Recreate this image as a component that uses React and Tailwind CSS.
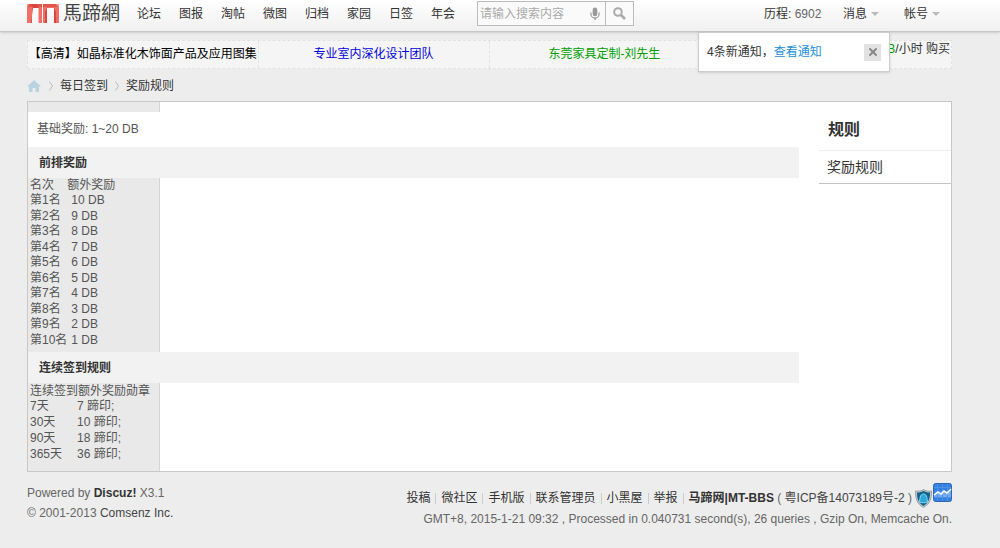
import React from 'react';
import { Mic, X } from 'lucide-react';

const NAV = ['论坛', '图报', '淘帖', '微图', '归档', '家园', '日签', '年会'];

const RANKS = [
  ['第1名', '10 DB'],
  ['第2名', '9 DB'],
  ['第3名', '8 DB'],
  ['第4名', '7 DB'],
  ['第5名', '6 DB'],
  ['第6名', '5 DB'],
  ['第7名', '4 DB'],
  ['第8名', '3 DB'],
  ['第9名', '2 DB'],
  ['第10名', '1 DB'],
];

const STREAKS = [
  ['7天', '7 蹄印;'],
  ['30天', '10 蹄印;'],
  ['90天', '18 蹄印;'],
  ['365天', '36 蹄印;'],
];

const FOOTER_LINKS = ['投稿', '微社区', '手机版', '联系管理员', '小黑屋', '举报'];

const Logo = () => (
  <a href="#" className="flex w-[110px] shrink-0 items-center gap-1 text-[19px] leading-6 text-[#444]">
    <svg width="32" height="19" viewBox="0 0 32 19" aria-hidden="true">
      <path d="M0 0H15V19H11.500V4H5V19H0z" fill="#ee7068" />
      <path d="M16 0H32V19H27V4H20V19H16z" fill="#ee7068" />
      <path d="M0 0H15V3H0zM16 0H32V3H16z" fill="#e2564d" />
      <path d="M4 0L6 4L4 19H5V4H12L9 0zM20 4L18 8V19H20zM27 4L29 8V19H27z" fill="#d8463e" />
      <path d="M0 4L2 0H0zM32 4L29 0H32z" fill="#f79a93" />
    </svg>
    馬蹄網
  </a>
);

const Caret = () => (
  <span className="border-x-4 border-t-4 border-x-transparent border-t-[#bbb]" />
);

const Notice = () => (
  <div className="absolute top-8 right-[110px] flex h-10 w-48 items-center justify-between border border-[#ccc] bg-white px-2 shadow">
    <p>
      4条新通知，
      <a href="#" className="text-[#1b91d6]">查看通知</a>
    </p>
    <button type="button" aria-label="关闭" className="flex size-[17px] items-center justify-center bg-[#e2e2e2] text-[#888]">
      <X size={12} strokeWidth={4} />
    </button>
  </div>
);

const Header = () => (
  <header className="relative z-10 flex h-8 items-center border-b border-[#c6c6c6] bg-linear-to-b from-white to-[#f0f0f0] pr-12 pb-1 pl-[27px] shadow-sm">
    <Logo />
    <nav className="flex gap-[18px]">
      {NAV.map((item) => (
        <a key={item} href="#" className="w-6 whitespace-nowrap">{item}</a>
      ))}
    </nav>
    <form className="ml-[22px] flex h-[25px] w-[157px] border border-[#bbb] bg-[#fafafa]">
      <input
        type="text"
        aria-label="搜索"
        placeholder="请输入搜索内容"
        className="w-0 flex-1 px-[2px] outline-none placeholder:text-[#aaa]"
      />
      <button type="button" aria-label="语音搜索" className="flex w-5 items-center justify-center text-[#999]">
        <Mic size={14} strokeWidth={2} className="[&>rect]:fill-[#999]" />
      </button>
      <button type="submit" aria-label="搜索" className="flex w-7 items-center justify-center border-l border-[#bbb]">
        <svg width="13" height="13" viewBox="0 0 13 13" fill="none" stroke="#aaa" strokeWidth="2" aria-hidden="true">
          <circle cx="5" cy="5" r="3.800" />
          <path d="M8 8L12 12" strokeWidth="2.500" />
        </svg>
      </button>
    </form>
    <div className="ml-auto flex">
      <a href="#" className="w-[79px]">历程: <span className="text-[#666]">6902</span></a>
      <button type="button" className="flex w-[61px] items-center gap-1">消息 <Caret /></button>
      <button type="button" className="flex w-12 items-center gap-1">帐号 <Caret /></button>
    </div>
    <Notice />
  </header>
);

const AdRow = () => (
  <div className="grid h-[29px] grid-cols-4 items-stretch border border-dashed border-[#e2e2e2] bg-[#f5f5f5] text-center leading-[27px]">
    <a href="#" className="border-r border-dashed border-[#e2e2e2] whitespace-nowrap text-black">【高清】如晶标准化木饰面产品及应用图集</a>
    <a href="#" className="border-r border-dashed border-[#e2e2e2] text-[#0000e0]">专业室内深化设计团队</a>
    <a href="#" className="border-r border-dashed border-[#e2e2e2] text-[#00a000]">东莞家具定制-刘先生</a>
    <a href="#" className="pr-px text-right leading-4"><span className="text-[#00a000]">5 DB</span>/小时 购买</a>
  </div>
);

const Separator = () => (
  <svg width="4" height="10" viewBox="0 0 4 10" fill="none" stroke="#bbb" aria-hidden="true">
    <path d="M0.500 0.500L3.500 5L0.500 9.500" />
  </svg>
);

const Breadcrumb = () => (
  <div className="flex h-8 items-center gap-[7px] pt-[2px]">
    <a href="#" aria-label="首页" className="mr-px">
      <svg width="14" height="12" viewBox="0 0 14 12" fill="#b9d3e0" aria-hidden="true">
        <path d="M7 0l7 6.500h-2V12H8.500V8h-3v4H2V6.500H0z" />
      </svg>
    </a>
    <Separator />
    <a href="#">每日签到</a>
    <Separator />
    <a href="#">奖励规则</a>
  </div>
);

const Band = ({ children }) => (
  <h2 className="h-[31px] bg-[#f2f2f2] pl-[11px] leading-8 font-bold">{children}</h2>
);

const Rules = () => (
  <main className="flex flex-1 flex-col">
    <div className="h-[10px] w-[132px] border-r border-[#d5d5d5] bg-[#e9e9e9]" />
    <p className="h-[35px] pl-[9px] leading-[35px] text-[#555]">基础奖励: 1~20 DB</p>
    <Band>前排奖励</Band>
    <div className="w-[132px] border-r border-[#d5d5d5] bg-[#e9e9e9] pb-1 pl-[2px] text-[#555]">
      <table className="h-[170px] w-full leading-[15px]">
        <thead>
          <tr>
            <th className="w-[37px] text-left font-normal">名次</th>
            <th className="text-left font-normal">额外奖励</th>
          </tr>
        </thead>
        <tbody>
          {RANKS.map(([rank, prize]) => (
            <tr key={rank}>
              <td className="whitespace-nowrap">{rank}</td>
              <td className="pl-1">{prize}</td>
            </tr>
          ))}
        </tbody>
      </table>
    </div>
    <Band>连续签到规则</Band>
    <div className="w-[132px] flex-1 border-r border-[#d5d5d5] bg-[#e9e9e9] pt-px pb-[9px] pl-[2px] text-[#555]">
      <table className="h-[78px] w-full leading-[15px]">
        <thead>
          <tr>
            <th colSpan={2} className="text-left font-normal whitespace-nowrap">连续签到额外奖励勋章</th>
          </tr>
        </thead>
        <tbody>
          {STREAKS.map(([days, prize]) => (
            <tr key={days}>
              <td className="w-[47px]">{days}</td>
              <td>{prize}</td>
            </tr>
          ))}
        </tbody>
      </table>
    </div>
  </main>
);

const Sidebar = () => (
  <aside className="w-[132px]">
    <h2 className="h-[49px] border-b border-[#eee] pt-2 pl-[9px] text-base leading-10 font-bold">规则</h2>
    <a href="#" className="block h-[33px] border-b border-[#c4c4c4] pl-2 text-sm leading-8">奖励规则</a>
  </aside>
);

const Shield = () => (
  <svg width="17" height="19" viewBox="0 0 17 19" aria-hidden="true">
    <path d="M8.500 0.500C11 2 13.500 2.500 16.500 2C16.500 10 15 15 8.500 18.500C2 15 0.500 10 0.500 2C3.500 2.500 6 2 8.500 0.500z" fill="#c3c8cb" stroke="#9aa2a7" />
    <path d="M8.500 2C10.500 3 13 3.800 15 3.500C15 10 13.500 14 8.500 17C3.500 14 2 10 2 3.500C4 3.800 6.500 3 8.500 2z" fill="#12608c" />
    <path d="M4.500 13C5 11 4.500 5 8.500 5S12 11 12.500 13C10.500 14 6.500 14 4.500 13z" fill="#2fa5d6" stroke="#7fdcf8" />
  </svg>
);

const StatsIcon = () => (
  <svg width="19" height="19" viewBox="0 0 19 19" aria-hidden="true">
    <rect x="0.500" y="0.500" width="18" height="18" rx="2" fill="#3480df" stroke="#2a68bd" />
    <path d="M1 4.500h17M1 8.500h17M4.500 1v10M9.500 1v10M14.500 1v10" stroke="#4c90e8" />
    <path d="M1 12l4-3 3 2 3-3 3 2 4-4v9H1z" fill="#74aaf0" />
    <path d="M1 12l4-3 3 2 3-3 3 2 4-4" fill="none" stroke="#fff" strokeWidth="1.500" />
    <path d="M1 14.500h17M4.500 12v6M9.500 12v6M14.500 12v6" stroke="#4c90e8" />
  </svg>
);

const Footer = () => (
  <footer className="flex justify-between pt-[11px] whitespace-nowrap text-[#666]">
    <div className="leading-5">
      <p>Powered by <a href="#" className="font-bold text-[#333]">Discuz!</a> X3.1</p>
      <p>© 2001-2013 <a href="#" className="text-[#444]">Comsenz Inc.</a></p>
    </div>
    <div>
      <div className="flex h-[26px] items-center justify-end">
        {FOOTER_LINKS.map((item) => (
          <React.Fragment key={item}>
            <a href="#" className="pt-1 text-[#333]">{item}</a>
            <span className="mx-[5px] mt-1 h-[11px] w-px bg-[#ccc]" />
          </React.Fragment>
        ))}
        <span className="pt-1">
          <a href="#" className="font-bold text-[#333]">马蹄网|MT-BBS</a> ( <a href="#" className="text-[#444]">粤ICP备14073189号-2</a> )
        </span>
        <a href="#" aria-label="安全认证" className="ml-[3px] pt-1"><Shield /></a>
        <a href="#" aria-label="网站统计" className="mb-2 ml-px"><StatsIcon /></a>
      </div>
      <p className="text-right leading-5">
        GMT+8, 2015-1-21 09:32 , Processed in 0.040731 second(s), 26 queries , Gzip On, Memcache On.
      </p>
    </div>
  </footer>
);

export default function App() {
  return (
    <div className="min-h-screen bg-[#ededed] font-['Liberation_Sans','Noto_Sans_CJK_SC',sans-serif] text-xs text-[#333]">
      <Header />
      <div className="pt-2 pr-12 pl-[27px]">
        <AdRow />
        <Breadcrumb />
        <div className="flex gap-5 border border-[#c8c8c8] bg-white">
          <Rules />
          <Sidebar />
        </div>
        <Footer />
      </div>
    </div>
  );
}
